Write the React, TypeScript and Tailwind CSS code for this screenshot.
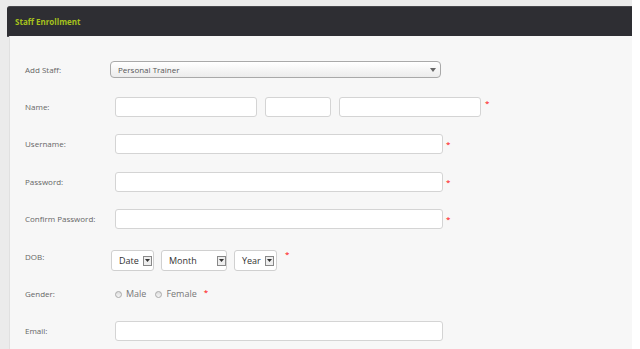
import React from "react";

const font = { fontFamily: '"Open Sans", "DejaVu Sans", sans-serif' };

function Star({ className = "" }: { className?: string }) {
  return <span className={"text-[8px] leading-none text-[#ff0000] " + className}>*</span>;
}

function Input({ w }: { w: string }) {
  return <div className={"h-[20px] rounded-[3px] border border-[#d4d4d4] bg-white " + w} />;
}

function MiniSelect({ label, w, gap }: { label: string; w: string; gap: string }) {
  return (
    <div className={"flex h-[21px] items-center rounded-[3px] border border-[#d0d0d0] bg-white pl-[7px] " + w}>
      <span className="text-[9px] text-[#333]">{label}</span>
      <span className={"flex h-[10px] w-[9px] items-center justify-center border border-[#888] bg-[#eee] " + gap}>
        <svg width="5" height="3" viewBox="0 0 5 3"><path d="M0 0h5L2.5 3z" fill="#333" /></svg>
      </span>
    </div>
  );
}

function Row({ label, children }: { label: string; children: React.ReactNode }) {
  return (
    <div className="flex h-[37.4px] shrink-0 items-center">
      <div className="w-[85px] shrink-0 text-[8px] text-[#666]">{label}</div>
      <div className="flex items-center">{children}</div>
    </div>
  );
}

export default function App() {
  return (
    <div className="flex h-[349px] w-[640px] overflow-hidden bg-white" style={font}>
      <div className="flex w-[632px] flex-col bg-[#ebebeb] pl-[7px] pt-[6px]">
        <div className="flex h-[30px] shrink-0 items-center rounded-tl-[3px] border-t border-[#46464b] bg-[#2e2e33] pl-[8px] shadow-[0_1px_0_#55555a]">
          <span className="text-[8px] font-bold text-[#a6c21c]">Staff Enrollment</span>
        </div>
        <div className="ml-[2px] flex min-h-0 flex-1 flex-col overflow-hidden border-l border-[#e0e0e0] bg-[#f7f7f7] pl-[15px] pt-[15px]">
          <Row label="Add Staff:">
            <div className="flex h-[17px] w-[331px] items-center justify-between rounded-[4px] border border-[#a9a9a9] bg-gradient-to-b from-white to-[#ececec] pl-[7px] pr-[4px]">
              <span className="text-[8px] text-[#555]">Personal Trainer</span>
              <svg width="6" height="4" viewBox="0 0 6 4"><path d="M0 0h6L3 4z" fill="#666" /></svg>
            </div>
          </Row>
          <Row label="Name:">
            <div className="ml-[5px] flex items-start gap-[8px]">
              <Input w="w-[142px]" />
              <Input w="w-[66px]" />
              <Input w="w-[142px]" />
              <Star className="mt-[2px] -ml-[4px]" />
            </div>
          </Row>
          <Row label="Username:">
            <div className="ml-[5px] flex items-start gap-[3px]">
              <Input w="w-[328px]" />
              <Star className="mt-[6px]" />
            </div>
          </Row>
          <Row label="Password:">
            <div className="ml-[5px] flex items-start gap-[3px]">
              <Input w="w-[328px]" />
              <Star className="mt-[6px]" />
            </div>
          </Row>
          <Row label="Confirm Password:">
            <div className="ml-[5px] flex items-start gap-[3px]">
              <Input w="w-[328px]" />
              <Star className="mt-[6px]" />
            </div>
          </Row>
          <Row label="DOB:">
            <div className="ml-[1px] mt-[8px] flex items-start gap-[7px]">
              <MiniSelect label="Date" w="w-[43px]" gap="ml-[4px]" />
              <MiniSelect label="Month" w="w-[66px]" gap="ml-[20px]" />
              <MiniSelect label="Year" w="w-[43px]" gap="ml-[4px]" />
              <Star className="ml-[1px]" />
            </div>
          </Row>
          <Row label="Gender:">
            <div className="ml-[5px] flex items-center text-[9px] text-[#777]">
              <span className="h-[7px] w-[7px] rounded-full border border-[#aaa] bg-gradient-to-b from-[#ddd] to-[#f5f5f5]" />
              <span className="ml-[4px]">Male</span>
              <span className="ml-[9px] h-[7px] w-[7px] rounded-full border border-[#aaa] bg-gradient-to-b from-[#ddd] to-[#f5f5f5]" />
              <span className="ml-[4px]">Female</span>
              <Star className="ml-[7px] -mt-[5px]" />
            </div>
          </Row>
          <Row label="Email:">
            <div className="ml-[5px] flex items-start gap-[3px]">
              <Input w="w-[328px]" />
            </div>
          </Row>
        </div>
      </div>
    </div>
  );
}
